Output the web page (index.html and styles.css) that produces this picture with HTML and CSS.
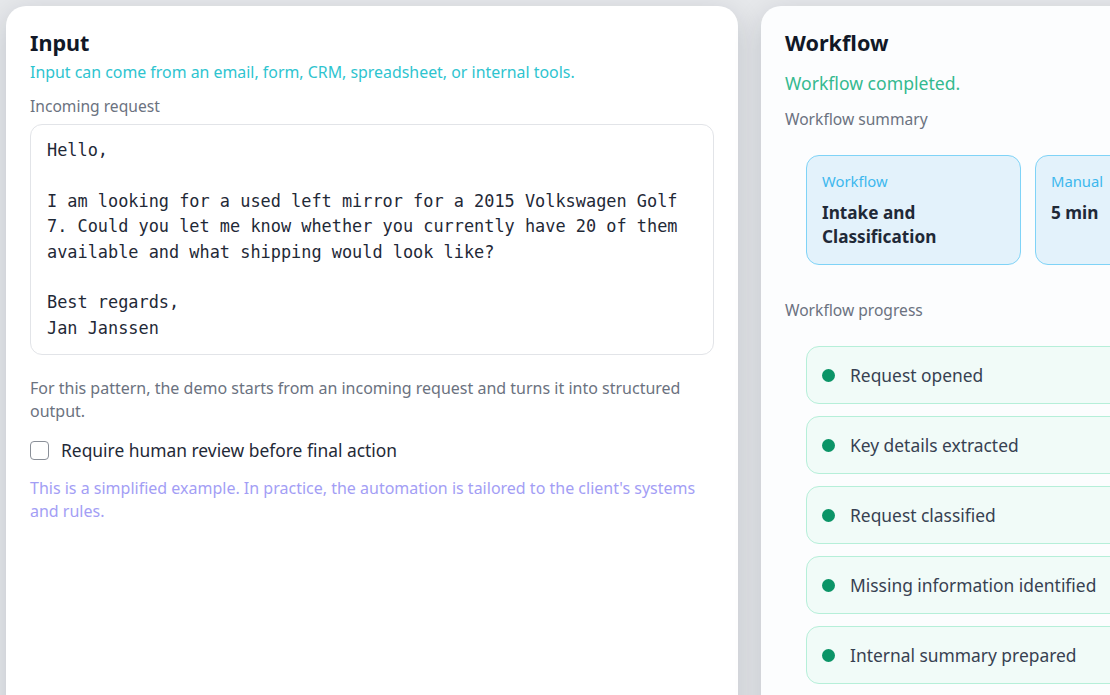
FILE: index.html
```html
<!DOCTYPE html>
<html>
<head>
<meta charset="utf-8">
<link rel="stylesheet" href="styles.css">
</head>
<body>
<div class="page">
  <section class="card">
    <h2 class="title">Input</h2>
    <p class="sub">Input can come from an email, form, CRM, spreadsheet, or internal tools.</p>
    <div class="label">Incoming request</div>
    <div class="textbox">Hello,

I am looking for a used left mirror for a 2015 Volkswagen Golf
7. Could you let me know whether you currently have 20 of them
available and what shipping would look like?

Best regards,
Jan Janssen</div>
    <p class="note">For this pattern, the demo starts from an incoming request and turns it into structured output.</p>
    <label class="check"><span class="box"></span>Require human review before final action</label>
    <p class="hint">This is a simplified example. In practice, the automation is tailored to the client's systems and rules.</p>
  </section>
  <section class="card right">
    <h2 class="title">Workflow</h2>
    <p class="done">Workflow completed.</p>
    <div class="label">Workflow summary</div>
    <div class="summary">
      <div class="scard wide">
        <div class="skey">Workflow</div>
        <div class="sval">Intake and Classification</div>
      </div>
      <div class="scard">
        <div class="skey">Manual</div>
        <div class="sval">5 min</div>
      </div>
    </div>
    <div class="label prog">Workflow progress</div>
    <div class="steps">
      <div class="step"><span class="dot"></span>Request opened</div>
      <div class="step"><span class="dot"></span>Key details extracted</div>
      <div class="step"><span class="dot"></span>Request classified</div>
      <div class="step"><span class="dot"></span>Missing information identified</div>
      <div class="step"><span class="dot"></span>Internal summary prepared</div>
    </div>
  </section>
</div>
</body>
</html>
```
FILE: styles.css
```css
* { box-sizing: border-box; }
html, body { margin: 0; padding: 0; }
body {
  background: #e6e8eb;
  font-family: "Noto Sans", "Open Sans", sans-serif;
  width: 1110px;
  height: 695px;
  overflow: hidden;
}
.page {
  display: grid;
  grid-template-columns: 732px 732px;
  gap: 23px;
  padding: 6px 0 0 6px;
}
.card {
  background: #fff;
  border-radius: 20px;
  height: 760px;
  padding: 26px 24px 0 24px;
  box-shadow: 0 8px 28px rgba(15, 23, 42, 0.16);
}
.title {
  margin: 0;
  font-size: 21.6px;
  font-weight: 700;
  color: #111827;
  line-height: 22px;
}
.sub {
  margin: 7px 0 0;
  font-size: 15.9px;
  line-height: 22px;
  color: #2ec4cf;
}
.label {
  margin-top: 12px;
  font-size: 15.6px;
  line-height: 22px;
  color: #6b7280;
}
.textbox {
  margin-top: 7px;
  border: 1px solid #e2e4e8;
  border-radius: 12px;
  height: 231px;
  padding: 13px 16px;
  white-space: pre;
  font-family: "DejaVu Sans Mono", monospace;
  font-size: 16.9px;
  line-height: 25.4px;
  color: #1f2937;
}
.note {
  margin: 22px 0 0;
  font-size: 16px;
  line-height: 23px;
  color: #6b7280;
}
.check {
  display: flex;
  align-items: center;
  gap: 12px;
  margin-top: 15px;
  font-size: 17.4px;
  line-height: 24px;
  color: #1f2937;
}
.box {
  width: 19px;
  height: 19px;
  border: 1.5px solid #8a8f98;
  border-radius: 4px;
  background: #fff;
}
.hint {
  margin: 15px 0 0;
  font-size: 16px;
  line-height: 23px;
  color: #a39ef5;
}
.right { padding-left: 24px; background: #fcfdfe; }
.done {
  margin: 17px 0 0;
  font-size: 17.6px;
  line-height: 24px;
  color: #34b98f;
}
.right .label { margin-top: 13px; }
.summary {
  display: flex;
  gap: 14px;
  margin: 25px 0 0 21px;
}
.scard {
  background: #e3f2fb;
  border: 1.5px solid #7fd3f7;
  border-radius: 13px;
  width: 215px;
  height: 110px;
  padding: 15px 15px;
  flex-shrink: 0;
}
.skey {
  font-size: 14.8px;
  line-height: 20px;
  color: #3db8ee;
}
.sval {
  margin-top: 10px;
  font-size: 17.2px;
  line-height: 24px;
  font-weight: 700;
  color: #1f2937;
}
.right .label.prog { margin-top: 34px; }
.steps {
  display: flex;
  flex-direction: column;
  gap: 12px;
  margin: 25px 0 0 21px;
}
.step {
  display: flex;
  align-items: center;
  gap: 15px;
  height: 58px;
  padding-left: 15px;
  background: #f1fbf8;
  border: 1.5px solid #b6efd9;
  border-radius: 13px;
  font-size: 17.4px;
  color: #374151;
}
.dot {
  width: 13px;
  height: 13px;
  border-radius: 50%;
  background: #0b9467;
}
```
